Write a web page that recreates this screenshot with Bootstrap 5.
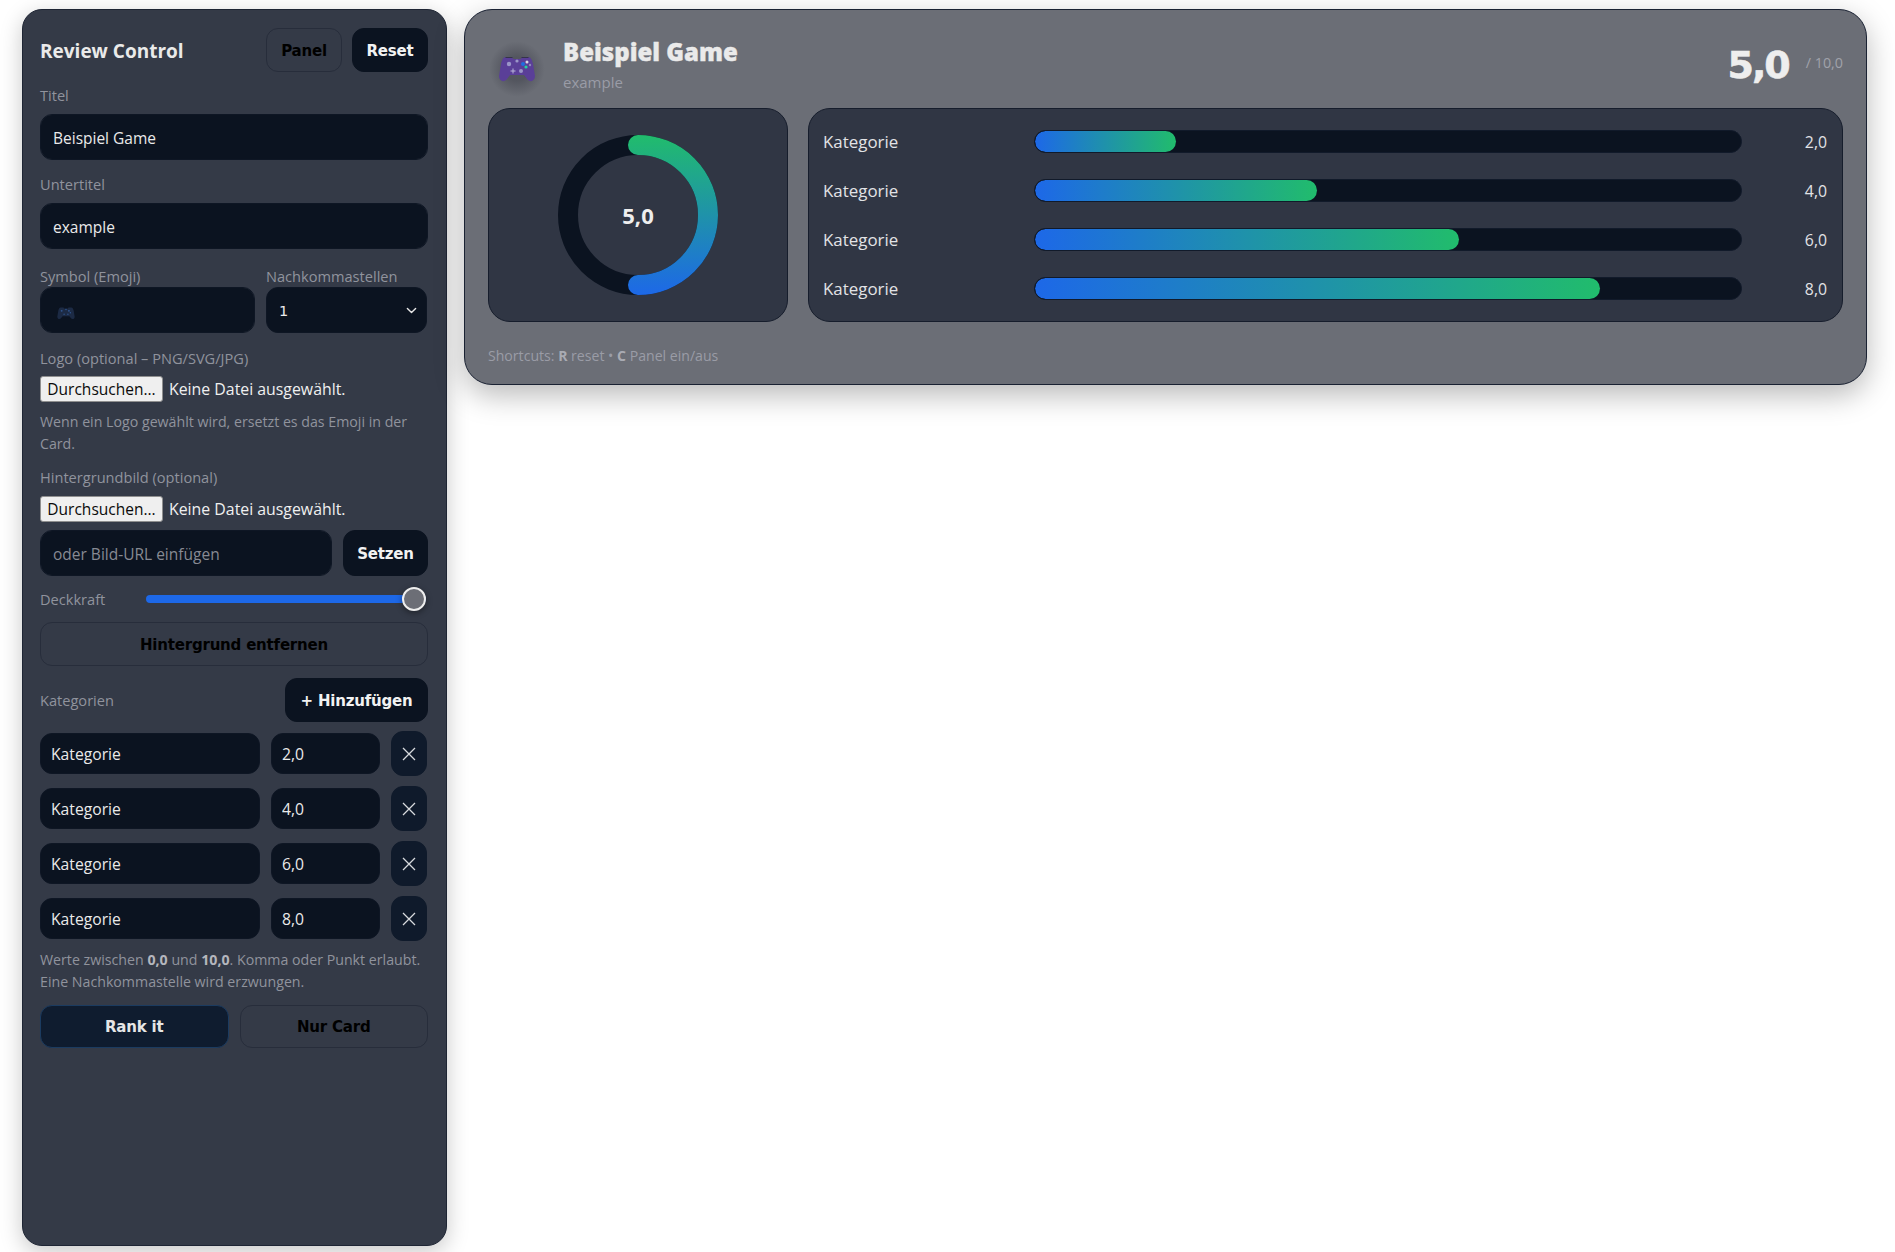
<!doctype html>
<html lang="de">
<head>
<meta charset="utf-8">
<title>Review Control</title>
<link href="https://cdn.jsdelivr.net/npm/bootstrap@5.3.0/dist/css/bootstrap.min.css" rel="stylesheet">
<style>
:root{--ink:#0b1320;--panel:#343a47;--deep:#303644;--mut:#90939d;--bright:#eaeaea;}
html,body{height:100%;background:#fff;}
body{font-family:"Open Sans","Noto Sans",sans-serif;font-size:15px;overflow:hidden;}
.stage{padding:9px 28px 6px 22px;gap:17px;height:1252px;}
.side{width:425px;height:1237px;flex:none;background:var(--panel);border:1px solid #1e2534;border-radius:20px;padding:18px 18px 18px 17px;box-shadow:0 6px 22px rgba(0,0,0,.22);color:var(--mut);}
.side-title{font-size:19px;font-weight:700;color:var(--bright);padding-top:2px;}
.fld{font-size:14.6px;line-height:20px;color:var(--mut);margin:0 0 9px;display:block;}
.tight{margin-bottom:1px;}
.snug{margin-bottom:8px;}
.snug9{margin-bottom:9px;}
.form-control.dark,.form-select.dark{background-color:var(--ink);border:1px solid #0e1624;color:var(--bright);border-radius:12px;height:46px;padding:2px 12px 0;font-size:15.5px;box-shadow:none;}
.form-control.dark::placeholder{color:#878a93;opacity:1;}
.form-select.dark{font-family:"DejaVu Sans",sans-serif;font-size:14.5px;padding-top:4px;background-position:right 9px center;background-size:11px;background-image:url("data:image/svg+xml,%3csvg xmlns='http://www.w3.org/2000/svg' viewBox='0 0 16 16'%3e%3cpath fill='none' stroke='%23e8e8e8' stroke-linecap='round' stroke-linejoin='round' stroke-width='2' d='m2 5 6 6 6-6'/%3e%3c/svg%3e");}
.act{font-family:"DejaVu Sans",sans-serif;font-weight:700;font-size:15px;border-radius:12px;height:44px;padding:2px 0 0;letter-spacing:-.2px;}
.act.solid{background:var(--ink);border:1px solid var(--ink);color:#f2f2f2;}
.act.ghost{background:transparent;border:1px solid #272d3b;color:#000;}
.act.prime{background:#0f1c2f;border:1px solid #1b3b60;color:#e6e6e6;}
.w76{width:76px;}.w85{width:85px;height:46px;}.w143{width:143px;height:44px;}
.gap10{gap:10px;}.gap11{gap:11px;}
.mb14{margin-bottom:13px;}.mb14b{margin-bottom:14px;}.mb17{margin-bottom:17px;}.mb15{margin-bottom:15px;}.mb7{margin-bottom:7px;}
.sym{width:215px;flex:none;}.dec{width:161px;flex:none;}
.emo-in{position:absolute;left:17px;top:41px;width:18px;height:13px;}
.pick{height:27px;font-size:15.85px;color:#f0f0f0;line-height:26px;}
.pick-btn{display:inline-block;width:123px;height:26px;line-height:24px;text-align:center;background:#efefef;border:1px solid #8f8f8f;border-radius:3px;color:#0a0a0a;font-size:15.5px;margin-right:6px;padding:0;white-space:nowrap;}
.hlp{font-size:14.2px;line-height:22px;color:var(--mut);}
.hlp b{color:#b4b6bd;font-weight:700;}
.note-a{margin:8px 0 12px;}
.range-row{height:22px;margin:12px 0;}
.range-lbl{width:106px;font-size:14.6px;padding-top:1px;}
.rng{flex:1;height:26px;width:auto;background:transparent;margin-right:2px;}
.rng::-webkit-slider-runnable-track{height:8px;border-radius:4px;background:#1d68e8;}
.rng::-webkit-slider-thumb{width:24px;height:24px;margin-top:-8px;border-radius:50%;background:#6c6e76;border:2px solid #eee;box-shadow:0 2px 6px rgba(0,0,0,.4);}
.full{height:44px;display:block;width:100%;}
.cat-head{margin:12px 0 9px;height:44px;}
.cat-row{height:45px;margin-bottom:10px;}
.form-control.cell{height:41px;background:var(--ink);border:1px solid #0e1624;border-radius:12px;color:var(--bright);padding:0 10px;font-size:15.7px;box-shadow:none;}
.cell-name{width:220px;flex:none;}.cell-val{width:109px;flex:none;}
.xbtn{width:36px;height:45px;flex:none;padding:0;background:#0f1a2b;border:1px solid #0f1a2b;border-radius:12px;display:flex;align-items:center;justify-content:center;}
.note-b{margin-top:-2px;margin-bottom:12px;}
.half{flex:1 1 0;height:43px;}
.show{width:1403px;height:376px;flex:none;background:#6b6e76;border:1px solid #1a2233;border-radius:28px;padding:0 23px;box-shadow:0 10px 30px rgba(0,0,0,.28);}
.show-top{height:98px;padding-top:12px;}
.icon-glow{width:56px;height:56px;margin-left:1px;margin-right:18px;margin-top:8px;background:radial-gradient(circle,rgba(60,62,72,.5) 30%,rgba(60,62,72,0) 70%);}
.game-title{font-size:24px;font-weight:800;color:var(--bright);line-height:32px;margin-top:-1px;-webkit-text-stroke:.35px var(--bright);}
.game-sub{font-size:15px;color:#9a9ca6;line-height:22px;margin-top:3px;}
.score{font-family:"DejaVu Sans",sans-serif;font-size:38px;font-weight:700;color:#eee;line-height:46px;margin-top:0;letter-spacing:-2px;-webkit-text-stroke:.6px #eee;}
.score-of{font-size:14.3px;color:#a0a2aa;margin-left:17px;margin-top:-4px;}
.box{height:214px;background:var(--deep);border:1px solid #161d2c;border-radius:22px;}
.box-ring{width:300px;flex:none;position:relative;}
.ring-val{position:absolute;inset:0;display:flex;align-items:center;justify-content:center;font-size:22px;font-weight:700;color:#eee;}
.gap20{gap:20px;}
.box-bars{flex:1;padding:21px 15px 0;}
.bar-row{height:23px;margin-bottom:26px;color:#e2e3e6;font-size:15.8px;}
.bar-row .nm{width:211px;flex:none;font-size:16.9px;padding-top:1px;margin-left:-1px;}
.trk{width:708px;height:23px;background:var(--ink);border:1px solid #111a2a;border-radius:12px;flex:none;overflow:hidden;}
.fil{height:100%;border-radius:12px;background:linear-gradient(90deg,#1d68e8,#21bc6c);}
.vl{flex:1;text-align:right;padding-top:2px;}
.foot{font-size:14.1px;color:#9a9ca6;margin-top:23px;}
.foot b{color:#a9abb3;}
</style>
</head>
<body>
<div class="stage d-flex align-items-start">
  <aside class="side">
    <div class="d-flex align-items-center mb14">
      <div class="side-title flex-grow-1">Review Control</div>
      <div class="d-flex gap10">
        <button class="btn act ghost w76">Panel</button>
        <button class="btn act solid w76">Reset</button>
      </div>
    </div>
    <label class="fld">Titel</label>
    <input class="form-control dark mb14b" value="Beispiel Game">
    <label class="fld">Untertitel</label>
    <input class="form-control dark mb17" value="example">
    <div class="d-flex gap11 mb15">
      <div class="sym position-relative">
        <label class="fld tight">Symbol (Emoji)</label>
        <input class="form-control dark" value="" aria-label="Symbol">
        <svg class="emo-in" viewBox="0 0 36 27" aria-hidden="true"><path fill="#1c2a44" d="M7 1h6l1 2h8l1-2h6c3 0 4 3 5 7l2 12c0 5-5 7-8 3l-3-4H11l-3 4c-3 4-8 2-8-3L2 8c1-4 2-7 5-7z"/><g fill="#2f5590"><circle cx="9" cy="8" r="2"/><circle cx="24" cy="8" r="2"/><circle cx="18" cy="5" r="1.5"/><circle cx="27" cy="12" r="1.5"/><circle cx="14" cy="15" r="1.5"/><circle cx="22" cy="15" r="1.5"/></g></svg>
      </div>
      <div class="dec">
        <label class="fld tight">Nachkommastellen</label>
        <select class="form-select dark"><option>1</option></select>
      </div>
    </div>
    <label class="fld snug">Logo (optional – PNG/SVG/JPG)</label>
    <div class="pick d-flex"><span class="pick-btn">Durchsuchen...</span><span>Keine Datei ausgewählt.</span></div>
    <div class="hlp note-a">Wenn ein Logo gewählt wird, ersetzt es das Emoji in der Card.</div>
    <label class="fld snug9">Hintergrundbild (optional)</label>
    <div class="pick d-flex mb7"><span class="pick-btn">Durchsuchen...</span><span>Keine Datei ausgewählt.</span></div>
    <div class="d-flex gap11">
      <input class="form-control dark flex-grow-1" placeholder="oder Bild-URL einfügen">
      <button class="btn act solid w85 flex-shrink-0">Setzen</button>
    </div>
    <div class="range-row d-flex align-items-center">
      <span class="range-lbl">Deckkraft</span>
      <input type="range" class="form-range rng" min="0" max="100" value="100" aria-label="Deckkraft">
    </div>
    <button class="btn act ghost full">Hintergrund entfernen</button>
    <div class="cat-head d-flex align-items-center justify-content-between">
      <span class="fld mb-0">Kategorien</span>
      <button class="btn act solid w143">+ Hinzufügen</button>
    </div>
    <div class="cat-row d-flex align-items-center gap11">
      <input class="form-control cell cell-name" value="Kategorie"><input class="form-control cell cell-val" value="2,0">
      <button class="xbtn" aria-label="Entfernen"><svg width="14" height="14" viewBox="0 0 14 14"><path d="M1 1l12 12M13 1L1 13" stroke="#d8dade" stroke-width="1.3" fill="none"/></svg></button>
    </div>
    <div class="cat-row d-flex align-items-center gap11">
      <input class="form-control cell cell-name" value="Kategorie"><input class="form-control cell cell-val" value="4,0">
      <button class="xbtn" aria-label="Entfernen"><svg width="14" height="14" viewBox="0 0 14 14"><path d="M1 1l12 12M13 1L1 13" stroke="#d8dade" stroke-width="1.3" fill="none"/></svg></button>
    </div>
    <div class="cat-row d-flex align-items-center gap11">
      <input class="form-control cell cell-name" value="Kategorie"><input class="form-control cell cell-val" value="6,0">
      <button class="xbtn" aria-label="Entfernen"><svg width="14" height="14" viewBox="0 0 14 14"><path d="M1 1l12 12M13 1L1 13" stroke="#d8dade" stroke-width="1.3" fill="none"/></svg></button>
    </div>
    <div class="cat-row d-flex align-items-center gap11">
      <input class="form-control cell cell-name" value="Kategorie"><input class="form-control cell cell-val" value="8,0">
      <button class="xbtn" aria-label="Entfernen"><svg width="14" height="14" viewBox="0 0 14 14"><path d="M1 1l12 12M13 1L1 13" stroke="#d8dade" stroke-width="1.3" fill="none"/></svg></button>
    </div>
    <div class="hlp note-b">Werte zwischen <b>0,0</b> und <b>10,0</b>. Komma oder Punkt erlaubt. Eine Nachkommastelle wird erzwungen.</div>
    <div class="d-flex gap11">
      <button class="btn act prime half">Rank it</button>
      <button class="btn act ghost half">Nur Card</button>
    </div>
  </aside>
  <main class="show">
    <div class="show-top d-flex align-items-center">
      <div class="icon-glow d-flex align-items-center justify-content-center flex-shrink-0">
        <svg width="36" height="27" viewBox="0 0 36 27" aria-hidden="true"><path fill="#5a3f98" d="M7 1h6l1 2h8l1-2h6c3 0 4 3 5 7l2 12c0 5-5 7-8 3l-3-4H11l-3 4c-3 4-8 2-8-3L2 8c1-4 2-7 5-7z"/><path d="M7 1h6l1 1H6z" fill="#35344a"/><path d="M23 1h6l1 1h-8z" fill="#35344a"/><g fill="#9b96c8"><circle cx="10" cy="8" r="2.2"/><circle cx="18" cy="5" r="1.6"/><circle cx="22" cy="15" r="2"/></g><path d="M14 12.5v5M11.5 15h5" stroke="#b9b6d8" stroke-width="1"/><circle cx="24" cy="8" r="2" fill="#1f6fe0"/><circle cx="28" cy="6" r="1.5" fill="#d8d8e4"/><circle cx="27" cy="11" r="1.6" fill="#22d3a0"/><circle cx="31" cy="9" r="1.2" fill="#8c88b8"/></svg>
      </div>
      <div class="flex-grow-1">
        <div class="game-title">Beispiel Game</div>
        <div class="game-sub">example</div>
      </div>
      <div class="d-flex align-items-center">
        <span class="score">5,0</span><span class="score-of">/ 10,0</span>
      </div>
    </div>
    <div class="d-flex gap20">
      <div class="box box-ring d-flex align-items-center justify-content-center">
        <svg width="180" height="180" viewBox="0 0 180 180" aria-hidden="true">
          <defs><linearGradient id="rg" gradientUnits="userSpaceOnUse" x1="90" y1="10" x2="90" y2="170"><stop offset="0" stop-color="#21bc6c"/><stop offset="1" stop-color="#1d68e8"/></linearGradient></defs>
          <circle cx="90" cy="90" r="70" fill="none" stroke="#0b1320" stroke-width="20"/>
          <path d="M90 20A70 70 0 0 1 90 160" fill="none" stroke="url(#rg)" stroke-width="20" stroke-linecap="round"/>
        </svg>
        <div class="ring-val">5,0</div>
      </div>
      <div class="box box-bars">
        <div class="bar-row d-flex align-items-center"><span class="nm">Kategorie</span><div class="trk"><div class="fil" style="width:20%"></div></div><span class="vl">2,0</span></div>
        <div class="bar-row d-flex align-items-center"><span class="nm">Kategorie</span><div class="trk"><div class="fil" style="width:40%"></div></div><span class="vl">4,0</span></div>
        <div class="bar-row d-flex align-items-center"><span class="nm">Kategorie</span><div class="trk"><div class="fil" style="width:60%"></div></div><span class="vl">6,0</span></div>
        <div class="bar-row d-flex align-items-center"><span class="nm">Kategorie</span><div class="trk"><div class="fil" style="width:80%"></div></div><span class="vl">8,0</span></div>
      </div>
    </div>
    <div class="foot">Shortcuts: <b>R</b> reset • <b>C</b> Panel ein/aus</div>
  </main>
</div>
<script src="https://cdn.jsdelivr.net/npm/bootstrap@5.3.0/dist/js/bootstrap.bundle.min.js"></script>
</body>
</html>
